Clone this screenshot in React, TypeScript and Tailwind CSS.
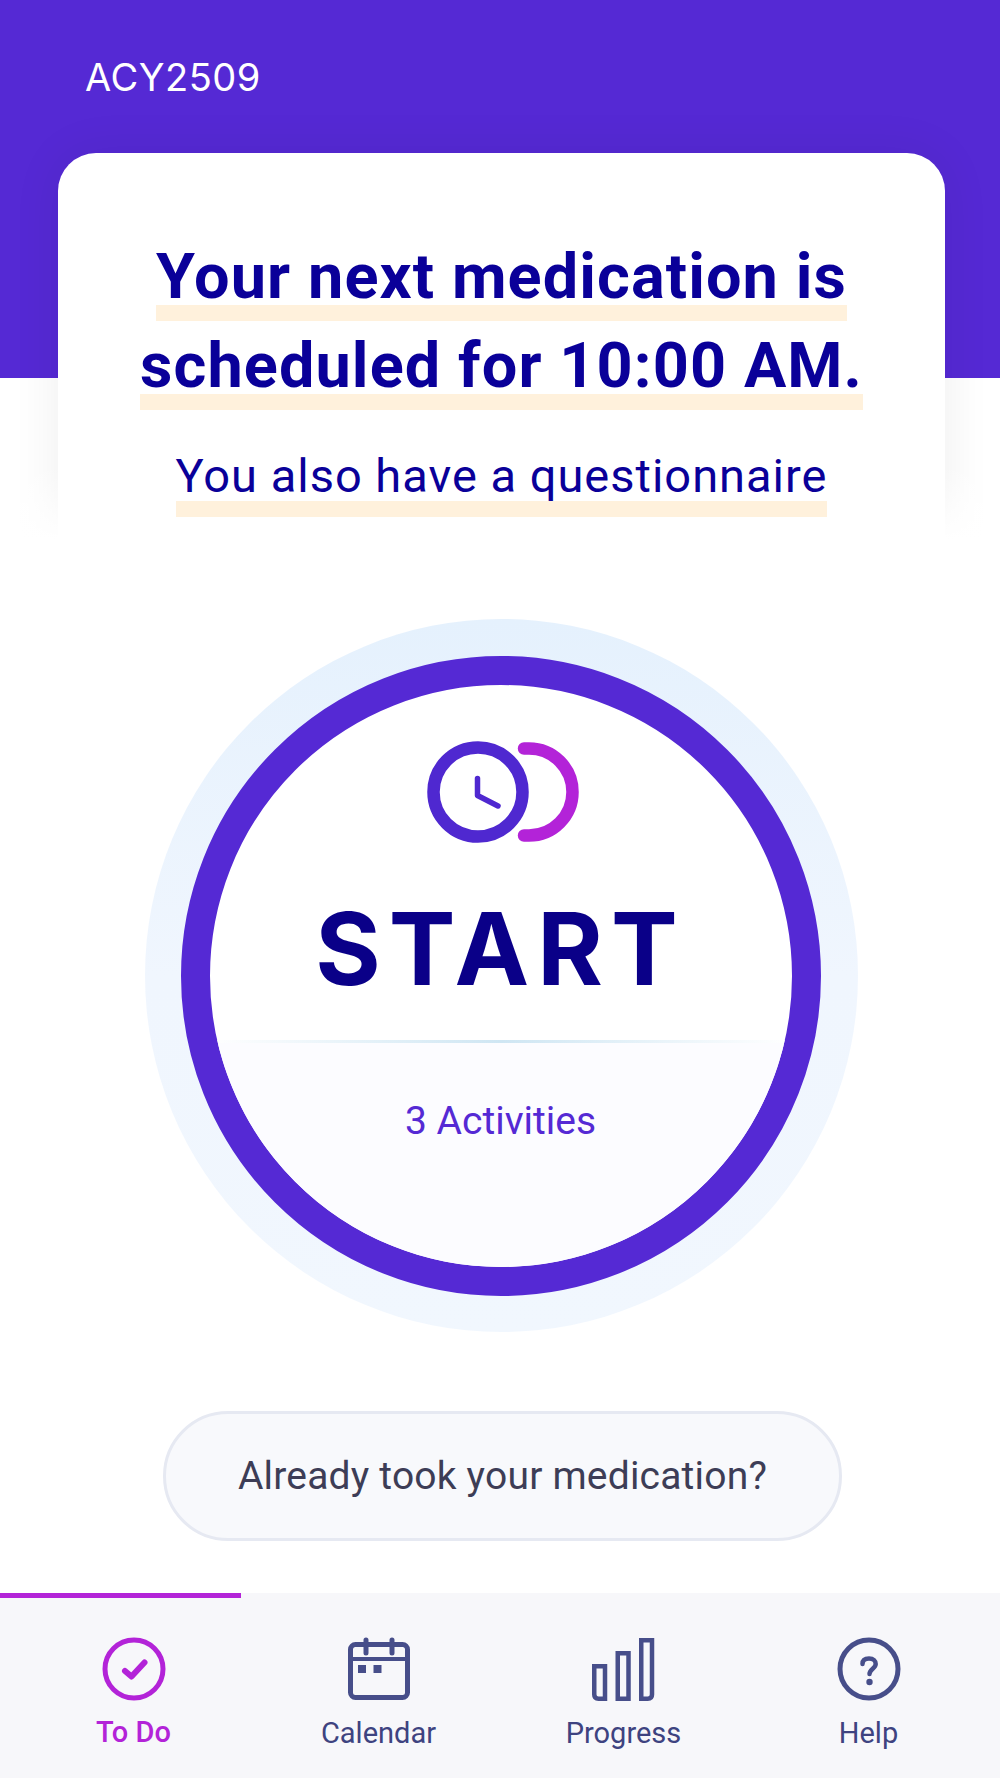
import React from "react";

const UNDERLINE =
  "inline-block bg-[linear-gradient(#fff1dc,#fff1dc)] bg-no-repeat bg-bottom bg-[length:100%_16px]";

function ClockMark() {
  return (
    <svg width="160" height="110" viewBox="0 0 160 110" fill="none">
      <path d="M103 12.5 H108 A43.5 43.5 0 0 1 108 99.5 H103" stroke="#b323d8" strokeWidth="12.5" strokeLinecap="round" />
      <circle cx="57" cy="56" r="44.5" stroke="#4f28d0" strokeWidth="12.5" />
      <path d="M56.5 42.5 V59.5 L77 70" stroke="#4f28d0" strokeWidth="5.5" strokeLinecap="round" strokeLinejoin="round" />
    </svg>
  );
}

function TodoIcon() {
  return (
    <svg width="64" height="64" viewBox="0 0 64 64" fill="none">
      <circle cx="32" cy="32" r="29" stroke="#b323d8" strokeWidth="5" />
      <path d="M23 34 L29.5 39.5 L42.5 25.5" stroke="#b323d8" strokeWidth="6" strokeLinecap="round" strokeLinejoin="round" />
    </svg>
  );
}

function CalendarIcon() {
  return (
    <svg width="64" height="64" viewBox="0 0 64 64" fill="none">
      <rect x="3.5" y="7.5" width="57" height="53" rx="5" stroke="#474e8a" strokeWidth="5" />
      <path d="M3.5 22 H60.5" stroke="#474e8a" strokeWidth="4" />
      <path d="M19 3 V16 M45 3 V16" stroke="#474e8a" strokeWidth="5" strokeLinecap="round" />
      <rect x="11" y="28" width="8" height="8" fill="#474e8a" />
      <rect x="26.5" y="28" width="8" height="8" fill="#474e8a" />
    </svg>
  );
}

function ProgressIcon() {
  return (
    <svg width="64" height="64" viewBox="0 0 64 64" fill="none">
      <path d="M2.25 29.25 H13 V61.750 H6.500 Q2.250 61.750 2.250 57.500 Z" stroke="#474e8a" strokeWidth="4.5" />
      <rect x="25.75" y="16.25" width="10.75" height="45.5" stroke="#474e8a" strokeWidth="4.5" />
      <path d="M49.25 3.25 H60 V57.500 Q60 61.750 55.750 61.750 H49.25 Z" stroke="#474e8a" strokeWidth="4.5" />
    </svg>
  );
}

function HelpIcon() {
  return (
    <svg width="64" height="64" viewBox="0 0 64 64" fill="none">
      <circle cx="32" cy="32" r="29" stroke="#474e8a" strokeWidth="5" />
      <path d="M25.5 27 C25.5 23 28 21.500 32 21.500 C36.500 21.500 38.700 24 38.700 27 C38.700 31.500 32.500 32 32.500 37" stroke="#474e8a" strokeWidth="4.5" strokeLinecap="round" />
      <circle cx="32.500" cy="45" r="3.200" fill="#474e8a" />
    </svg>
  );
}

const TABS = [
  { label: "To Do", icon: <TodoIcon />, active: true },
  { label: "Calendar", icon: <CalendarIcon />, active: false },
  { label: "Progress", icon: <ProgressIcon />, active: false },
  { label: "Help", icon: <HelpIcon />, active: false },
];

export default function App() {
  return (
    <div className="relative w-[1000px] h-[1778px] bg-white overflow-hidden flex flex-col font-['Roboto',sans-serif]">
      {/* Purple header */}
      <header className="h-[378px] shrink-0 bg-[#5529d4] pl-[85px] pt-[54px]">
        <p className="text-white text-[38px] leading-[46px] tracking-[0.5px] font-['Inter',sans-serif]">ACY2509</p>
      </header>

      {/* Message card */}
      <section className="relative -mt-[225px] ml-[58px] mr-[55px] h-[402px] shrink-0 bg-white rounded-t-[38px] pt-[79px] text-center text-[#0a0099] shadow-[0_0_50px_rgba(0,0,0,0.07)]">
        <div className="relative z-10">
          <h1 className="text-[63px] leading-[89px] font-bold tracking-[1.1px]">
            <span className={UNDERLINE}>Your next medication is</span>
            <br />
            <span className={UNDERLINE}>scheduled for 10:00 AM.</span>
          </h1>
          <p className="mt-[24px] text-[47px] leading-[83px] tracking-[1px]">
            <span className={UNDERLINE}>You also have a questionnaire</span>
          </p>
        </div>
      </section>

      {/* Fades the card's shadow into the page, under the card text */}
      <div className="absolute left-0 right-0 top-[465px] h-[150px] bg-gradient-to-b from-white/0 via-white to-white" />

      {/* Start button */}
      <div className="relative mt-[64px] ml-[145px] w-[713px] h-[713px] shrink-0 rounded-full bg-gradient-to-b from-[#e5f1fd] via-[#f0f6fe] to-[#f1f7fe] flex items-center justify-center pr-[2px]">
        <div className="w-[640px] h-[640px] rounded-full bg-white border-[29px] border-[#5529d4] overflow-hidden flex flex-col items-center">
          <div className="mt-[51px]">
            <ClockMark />
          </div>
          <p className="mt-[48px] text-[#0a0088] text-[100px] leading-[110px] font-bold tracking-[8px] font-['Inter',sans-serif]">
            START
          </p>
          <div className="mt-[36px] w-full h-[3px] shrink-0 bg-gradient-to-r from-white via-[#cfe6f3] to-white" />
          <div className="w-full flex-1 bg-[#fcfcff] text-center pt-[48px] text-[#5529d4] text-[39px] leading-[60px]">
            3 Activities
          </div>
        </div>
      </div>

      {/* Secondary action */}
      <button className="mt-[79px] ml-[163px] w-[679px] h-[130px] shrink-0 rounded-full bg-[#f8f9fc] border-[3px] border-[#e6e9f2] text-[#3d3d56] text-[39px] tracking-[0.2px]">
        Already took your medication?
      </button>

      {/* Tab bar */}
      <nav className="relative mt-auto h-[185px] bg-[#f7f7fa] grid grid-cols-4 pl-[11px] pr-[9px]">
        <div className="absolute left-0 top-0 w-[241px] h-[5px] bg-[#b323d8]" />
        {TABS.map((tab) => (
          <div key={tab.label} className="flex flex-col items-center pt-[44px]">
            {tab.icon}
            <span
              className={
                tab.active
                  ? "mt-[11px] text-[29px] leading-[40px] font-medium text-[#b323d8]"
                  : "mt-[11px] text-[29px] leading-[42px] text-[#3e4380]"
              }
            >
              {tab.label}
            </span>
          </div>
        ))}
      </nav>
    </div>
  );
}
